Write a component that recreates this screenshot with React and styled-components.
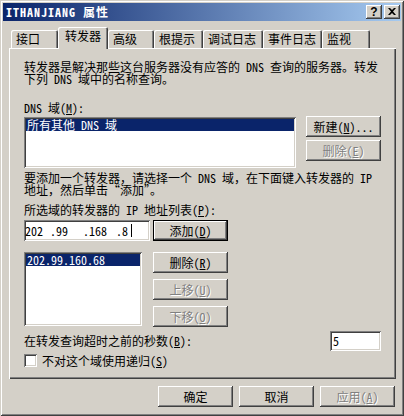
import React from "react";
import styled, { createGlobalStyle } from "styled-components";

const FACE = "#d4d0c8";
const FONT = `"Noto Sans Mono CJK SC", "Noto Sans CJK SC", "Liberation Sans", sans-serif`;

const GlobalStyle = createGlobalStyle`
  html, body {
    margin: 0;
    padding: 0;
    background: ${FACE};
  }
  body {
    font-family: ${FONT};
    font-size: 12px;
    line-height: 12px;
    color: #000;
  }
  * {
    box-sizing: border-box;
  }
`;

const Window = styled.div`
  width: 404px;
  height: 416px;
  padding: 3px;
  background: ${FACE};
  box-shadow: inset 1px 1px ${FACE}, inset -1px -1px #404040,
    inset 2px 2px #fff, inset -2px -2px #808080;
  display: flex;
  flex-direction: column;
`;

const TitleBar = styled.div`
  height: 18px;
  display: flex;
  align-items: center;
  padding: 0 1px 0 3px;
  background: linear-gradient(to right, #0a246a, #a6caf0);
`;

const TitleText = styled.span`
  flex: 1;
  color: #fff;
  font-weight: bold;
  letter-spacing: 1px;
`;

const CaptionButtons = styled.div`
  display: flex;
  gap: 2px;
`;

const CaptionButton = styled.div`
  width: 16px;
  height: 14px;
  background: ${FACE};
  box-shadow: inset -1px -1px #404040, inset 1px 1px #fff,
    inset -2px -2px #808080;
  display: flex;
  align-items: center;
  justify-content: center;
  font-family: "Liberation Sans", sans-serif;
  font-weight: bold;
  font-size: 12px;
  padding-bottom: 1px;
`;

const Body = styled.div`
  flex: 1;
  display: flex;
  flex-direction: column;
  padding: 6px 5px 0 6px;
`;

const TabStrip = styled.div`
  height: 21px;
  display: flex;
  align-items: flex-end;
  padding-left: 2px;
`;

const Tab = styled.div`
  position: relative;
  z-index: ${(p) => (p.$active ? 2 : 0)};
  width: ${(p) => p.$w}px;
  height: ${(p) => (p.$active ? 22 : 18)}px;
  margin-bottom: ${(p) => (p.$active ? -1 : 0)}px;
  padding: ${(p) => (p.$active ? "3px 0 0 7px" : "3px 0 0 5px")};
  background: ${FACE};
  border-radius: 2px 2px 0 0;
  box-shadow: inset 1px 1px #fff, inset -1px 0 #404040, inset -2px 0 #808080;
  white-space: nowrap;
`;

const Panel = styled.div`
  position: relative;
  z-index: 1;
  width: 387px;
  height: 331px;
  padding: 13px 15px 0 15px;
  display: flex;
  flex-direction: column;
  box-shadow: inset 1px 1px #fff, inset -1px -1px #404040,
    inset -2px -2px #808080;
`;

const Para = styled.p`
  margin: ${(p) => p.$top || 0}px 0 0 0;
  line-height: 12px;
  white-space: pre;
`;

const Row = styled.div`
  display: flex;
  align-items: ${(p) => p.$align || "flex-start"};
  justify-content: ${(p) => p.$justify || "flex-start"};
  gap: ${(p) => p.$gap || 0}px;
  margin-top: ${(p) => p.$top || 0}px;
`;

const sunken = `
  background: #fff;
  box-shadow: inset 1px 1px #808080, inset -1px -1px #fff,
    inset 2px 2px #404040, inset -2px -2px ${FACE};
`;

const ListBox = styled.div`
  ${sunken}
  width: ${(p) => p.$w}px;
  height: ${(p) => p.$h}px;
  margin-top: ${(p) => p.$top || 0}px;
  padding: 2px;
`;

const ListItem = styled.div`
  height: 12px;
  line-height: 12px;
  padding-left: 1px;
  background: ${(p) => (p.$selected ? "#0a246a" : "transparent")};
  color: ${(p) => (p.$selected ? "#fff" : "#000")};
  white-space: pre;
`;

const ButtonColumn = styled.div`
  display: flex;
  flex-direction: column;
  gap: ${(p) => p.$gap}px;
`;

const Button = styled.div`
  width: 75px;
  height: 21px;
  display: flex;
  align-items: center;
  justify-content: center;
  background: ${FACE};
  white-space: pre;
  border: ${(p) => (p.$default ? "1px solid #000" : "none")};
  box-shadow: inset -1px -1px #404040, inset 1px 1px #fff,
    inset -2px -2px #808080;
  color: ${(p) => (p.$disabled ? "#808080" : "#000")};
  text-shadow: ${(p) => (p.$disabled ? "1px 1px #fff" : "none")};
`;

const IpField = styled.div`
  ${sunken}
  width: 126px;
  height: 21px;
  display: flex;
  align-items: center;
  padding-left: 1px;
  white-space: pre;
`;

const Octet = styled.span`
  width: ${(p) => p.$w}px;
`;

const Dot = styled.span`
  width: 6px;
`;

const Caret = styled.span`
  width: 1px;
  height: 13px;
  margin-left: 3px;
  background: #000;
`;

const TextField = styled.div`
  ${sunken}
  width: 51px;
  height: 20px;
  display: flex;
  align-items: center;
  padding-left: 3px;
`;

const CheckBox = styled.div`
  ${sunken}
  width: 13px;
  height: 13px;
`;

const Footer = styled.div`
  display: flex;
  justify-content: flex-end;
  gap: 6px;
  margin-top: 7px;
  padding-right: 1px;
`;

const tabs = [
  { label: "接口", w: 47 },
  { label: "转发器", w: 50, active: true },
  { label: "高级", w: 46 },
  { label: "根提示", w: 49 },
  { label: "调试日志", w: 60 },
  { label: "事件日志", w: 59 },
  { label: "监视", w: 48 },
];

function Key({ k }) {
  return (
    <>
      (<u>{k}</u>)
    </>
  );
}

function CloseGlyph() {
  return (
    <svg width="8" height="7" viewBox="0 0 8 7">
      <path d="M0 0h2l2 2 2-2h2L5 3.5 8 7H6L4 5 2 7H0l3-3.5z" fill="#000" />
    </svg>
  );
}

export default function App() {
  return (
    <>
      <GlobalStyle />
      <Window>
        <TitleBar>
          <TitleText>ITHANJIANG 属性</TitleText>
          <CaptionButtons>
            <CaptionButton>?</CaptionButton>
            <CaptionButton>
              <CloseGlyph />
            </CaptionButton>
          </CaptionButtons>
        </TitleBar>
        <Body>
          <TabStrip>
            {tabs.map((t) => (
              <Tab key={t.label} $w={t.w} $active={t.active}>
                {t.label}
              </Tab>
            ))}
          </TabStrip>
          <Panel>
            <Para>
              {"转发器是解决那些这台服务器没有应答的 DNS 查询的服务器。转发\n下列 DNS 域中的名称查询。"}
            </Para>
            <Para $top={17}>
              DNS 域<Key k="M" />:
            </Para>
            <Row $justify="space-between" $top={2}>
              <ListBox $w={272} $h={51} $top={1}>
                <ListItem $selected>所有其他 DNS 域</ListItem>
              </ListBox>
              <ButtonColumn $gap={3}>
                <Button>
                  新建<Key k="N" />...
                </Button>
                <Button $disabled>
                  删除<Key k="E" />
                </Button>
              </ButtonColumn>
            </Row>
            <Para $top={4}>
              {"要添加一个转发器，请选择一个 DNS 域，在下面键入转发器的 IP\n地址，然后单击“添加”。"}
            </Para>
            <Para $top={8}>
              所选域的转发器的 IP 地址列表<Key k="P" />:
            </Para>
            <Row $gap={3} $top={4}>
              <IpField>
                <Octet $w={25}>202</Octet>
                <Dot>.</Dot>
                <Octet $w={27}>99</Octet>
                <Dot>.</Dot>
                <Octet $w={27}>168</Octet>
                <Dot>.</Dot>
                <span>8</span>
                <Caret />
              </IpField>
              <Button $default>
                添加<Key k="D" />
              </Button>
            </Row>
            <Row $gap={11} $top={11}>
              <ListBox $w={118} $h={74}>
                <ListItem $selected>202.99.160.68</ListItem>
              </ListBox>
              <ButtonColumn $gap={6}>
                <Button>
                  删除<Key k="R" />
                </Button>
                <Button $disabled>
                  上移<Key k="U" />
                </Button>
                <Button $disabled>
                  下移<Key k="O" />
                </Button>
              </ButtonColumn>
            </Row>
            <Row $justify="space-between" $align="center" $top={4}>
              <span>
                在转发查询超时之前的秒数<Key k="B" />:
              </span>
              <TextField>5</TextField>
            </Row>
            <Row $align="center" $gap={5} $top={3}>
              <CheckBox />
              <span>
                不对这个域使用递归<Key k="S" />
              </span>
            </Row>
          </Panel>
          <Footer>
            <Button>确定</Button>
            <Button>取消</Button>
            <Button $disabled>
              应用<Key k="A" />
            </Button>
          </Footer>
        </Body>
      </Window>
    </>
  );
}
